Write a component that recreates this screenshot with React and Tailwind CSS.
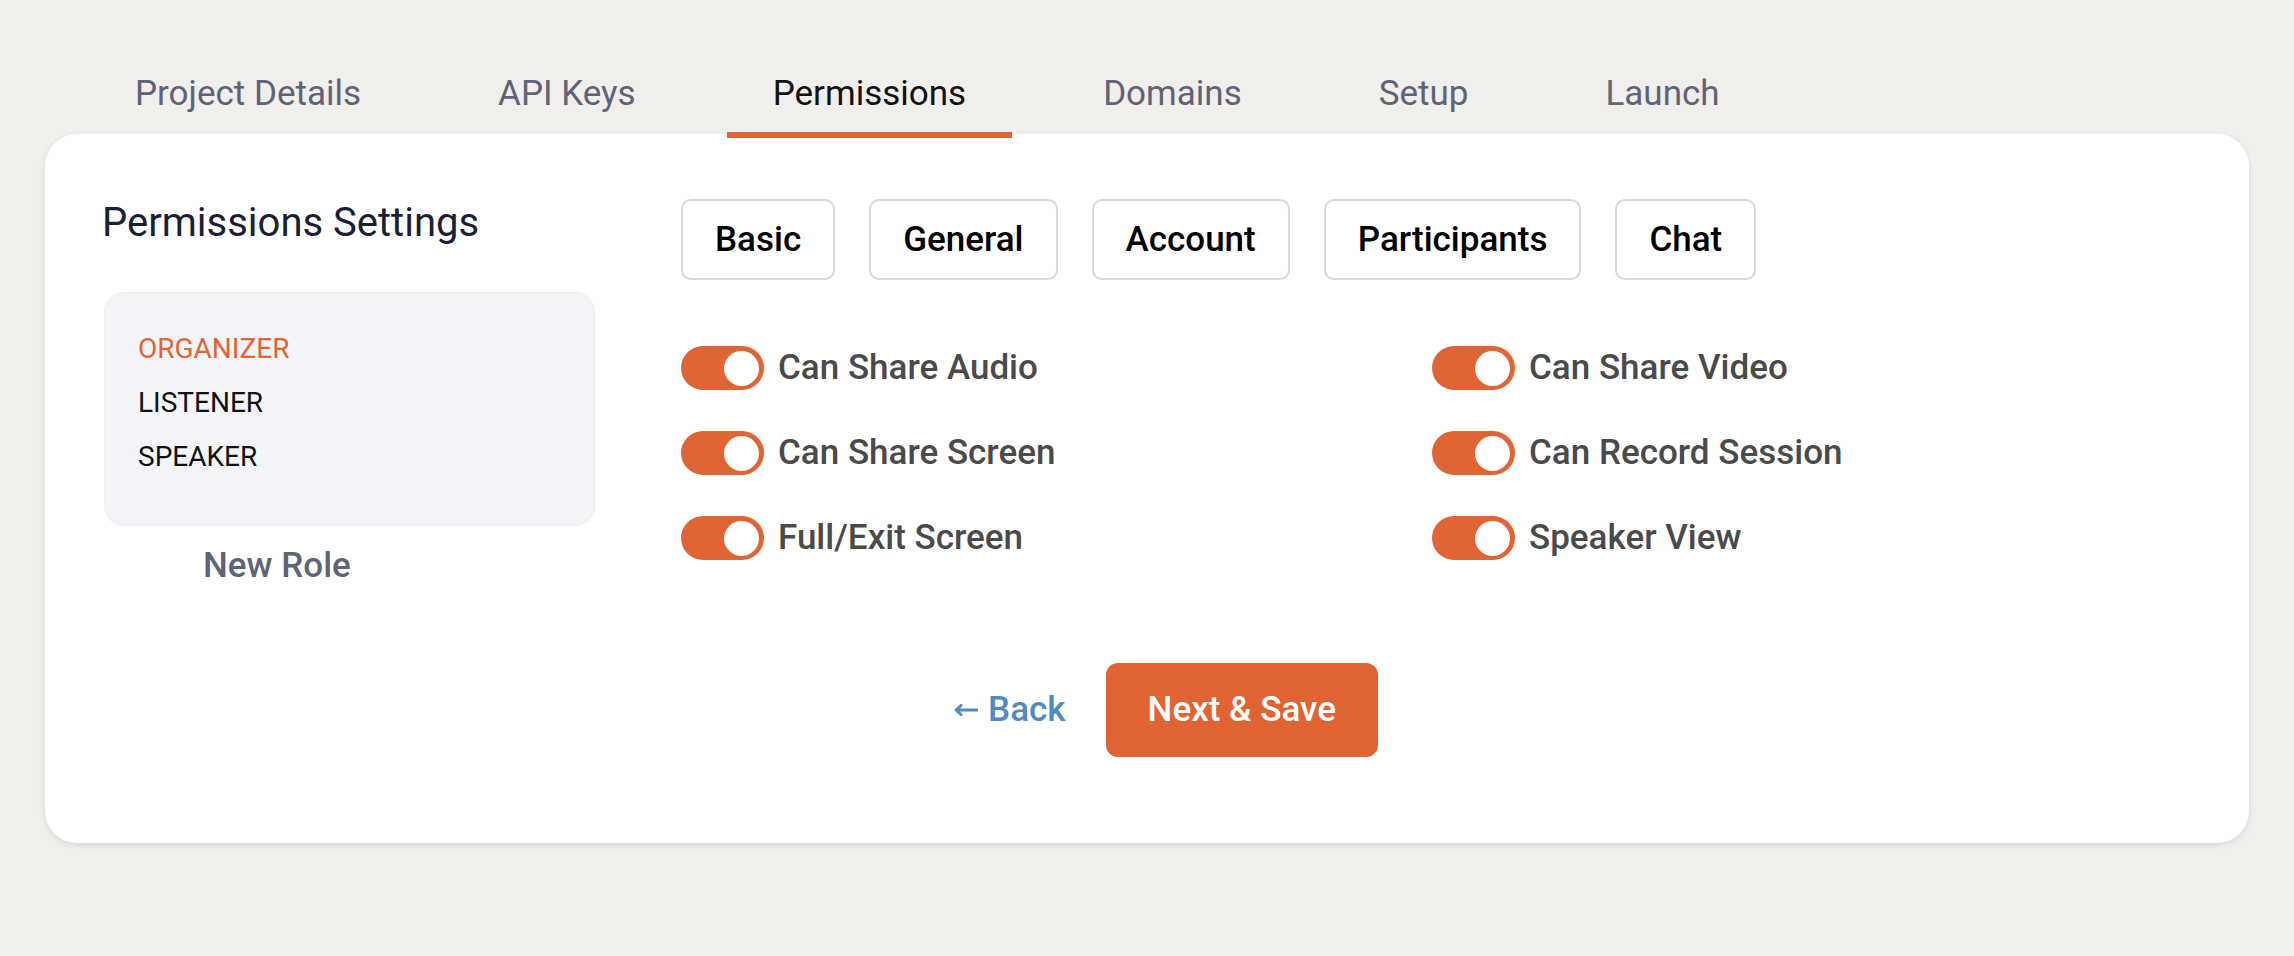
import React from "react";

const tabs = ["Project Details", "API Keys", "Permissions", "Domains", "Setup", "Launch"];
const cats = ["Basic", "General", "Account", "Participants", "Chat"];
const roles = ["ORGANIZER", "LISTENER", "SPEAKER"];
const perms = [
  "Can Share Audio",
  "Can Share Video",
  "Can Share Screen",
  "Can Record Session",
  "Full/Exit Screen",
  "Speaker View",
];

function Toggle() {
  return (
    <div className="flex h-[44px] w-[83px] shrink-0 items-center justify-end rounded-full bg-[#e06434] pr-[5px]">
      <div className="h-[35px] w-[35px] rounded-full bg-white" />
    </div>
  );
}

export default function App() {
  return (
    <div className="min-h-[956px] bg-[#f0efeb] pt-[73px] font-['Roboto',sans-serif]">
      <div className="relative z-10 flex gap-[45px] pl-[89px]">
        {tabs.map((t) => (
          <div
            key={t}
            className={
              t === "Permissions"
                ? "border-b-[6px] border-[#e06434] px-[46px] pb-[17px] text-[35px] leading-[42px] text-[#111111]"
                : "border-b-[6px] border-transparent px-[46px] pb-[17px] text-[35px] leading-[42px] text-[#5f6378]"
            }
          >
            {t}
          </div>
        ))}
      </div>
      <div className="mx-[45px] -mt-[4px] h-[709px] w-[2204px] rounded-[32px] bg-white pt-[65px] shadow-[0_2px_6px_rgba(0,0,0,0.10)]">
        <div className="flex">
          <div className="ml-[57px] w-[493px]">
            <div className="text-[40px] leading-[48px] text-[#1a1f36]">Permissions Settings</div>
            <div className="ml-[2px] mt-[45px] w-[491px] rounded-[20px] border border-[#eceef2] bg-[#f3f4f8] pb-[41px] pl-[33px] pt-[29px]">
              {roles.map((r, i) => (
                <div
                  key={r}
                  className={
                    i === 0
                      ? "text-[28px] leading-[54px] text-[#e06434]"
                      : "text-[28px] leading-[54px] text-[#111111]"
                  }
                >
                  {r}
                </div>
              ))}
            </div>
            <div className="ml-[101px] mt-[20px] text-[35px] font-medium leading-[40px] text-[#5f6378]">
              New Role
            </div>
          </div>
          <div className="ml-[86px]">
            <div className="flex gap-[34px]">
              {cats.map((c) => (
                <div
                  key={c}
                  className="flex h-[81px] items-center rounded-[10px] border-2 border-[#dcd6d6] px-[32px] text-[35px] font-medium leading-[40px] text-black"
                >
                  {c}
                </div>
              ))}
            </div>
            <div className="mt-[66px] grid grid-cols-[751px_751px] gap-y-[41px]">
              {perms.map((p) => (
                <div key={p} className="flex h-[44px] items-center gap-[14px]">
                  <Toggle />
                  <span className="text-[35px] font-medium leading-[44px] text-[#4a4a4a]">{p}</span>
                </div>
              ))}
            </div>
          </div>
        </div>
        <div className="mt-[77px] flex items-center justify-center gap-[40px] pl-[38px]">
          <div className="flex items-center gap-[10px] text-[35px] font-medium leading-[40px] text-[#4f8ac0]">
            <svg width="24" height="12" viewBox="0 0 24 12" fill="none">
              <path d="M23 6H3M7 1.5L2 6l5 4.5" stroke="#4f8ac0" strokeWidth="3" strokeLinecap="round" strokeLinejoin="round" />
            </svg>
            <span>Back</span>
          </div>
          <div className="flex h-[94px] items-center rounded-[12px] bg-[#df6333] px-[42px] text-[35px] font-medium leading-[40px] text-white">
            Next &amp; Save
          </div>
        </div>
      </div>
    </div>
  );
}
